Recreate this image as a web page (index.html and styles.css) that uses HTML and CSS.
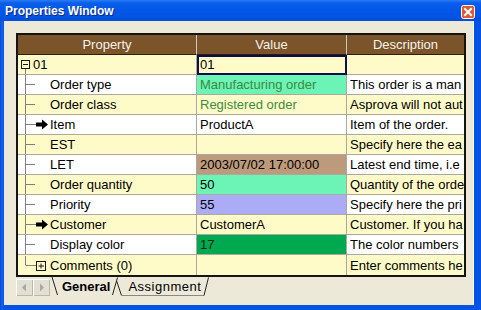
FILE: index.html
```html
<!DOCTYPE html>
<html>
<head>
<meta charset="utf-8">
<link rel="stylesheet" href="styles.css">
</head>
<body>
<div class="window">
  <div class="titlebar">
    <span class="title">Properties Window</span>
    <span class="close">
      <svg width="14" height="14" viewBox="0 0 14 14">
        <rect x="0.5" y="0.5" width="13" height="13" rx="2" fill="#E2582F" stroke="#FFFFFF"/>
        <path d="M4 4 L10 10 M10 4 L4 10" stroke="#FFFFFF" stroke-width="2" stroke-linecap="square"/>
      </svg>
    </span>
  </div>
  <div class="frame">
    <div class="client">
      <div class="grid">
        <div class="cell head c1">Property</div>
        <div class="cell head c2">Value</div>
        <div class="cell head c3">Description</div>

        <div class="cell c1 y prop root">
          <svg class="gut-root" width="15" height="19" viewBox="0 0 15 19">
            <rect x="3.5" y="5.5" width="8" height="8" fill="none" stroke="#1a1a1a"/>
            <path d="M5 9.5 H10" stroke="#1a1a1a"/>
            <path d="M7.5 14 V19" stroke="#808080"/>
          </svg>01</div>
        <div class="cell c2 y sel">01</div>
        <div class="cell c3 y"></div>

        <div class="cell c1 w prop">
          <svg class="gut" width="32" height="19" viewBox="0 0 32 19"><path d="M7.5 0 V19 M8 9.5 H17" stroke="#808080"/></svg>Order type</div>
        <div class="cell c2 mint gtext">Manufacturing order</div>
        <div class="cell c3 w">This order is a man</div>

        <div class="cell c1 y prop">
          <svg class="gut" width="32" height="19" viewBox="0 0 32 19"><path d="M7.5 0 V19 M8 9.5 H17" stroke="#808080"/></svg>Order class</div>
        <div class="cell c2 y gtext">Registered order</div>
        <div class="cell c3 y">Asprova will not aut</div>

        <div class="cell c1 w prop">
          <svg class="gut" width="32" height="19" viewBox="0 0 32 19"><path d="M7.5 0 V19 M8 9.5 H18" stroke="#808080"/><path d="M18 7.5 H24 V4.5 L30 9.5 L24 14.5 V11.5 H18 Z" fill="#000"/></svg>Item</div>
        <div class="cell c2 w">ProductA</div>
        <div class="cell c3 w">Item of the order.</div>

        <div class="cell c1 y prop">
          <svg class="gut" width="32" height="19" viewBox="0 0 32 19"><path d="M7.5 0 V19 M8 9.5 H17" stroke="#808080"/></svg>EST</div>
        <div class="cell c2 y"></div>
        <div class="cell c3 y">Specify here the ea</div>

        <div class="cell c1 w prop">
          <svg class="gut" width="32" height="19" viewBox="0 0 32 19"><path d="M7.5 0 V19 M8 9.5 H17" stroke="#808080"/></svg>LET</div>
        <div class="cell c2 tan">2003/07/02 17:00:00</div>
        <div class="cell c3 w">Latest end time, i.e</div>

        <div class="cell c1 y prop">
          <svg class="gut" width="32" height="19" viewBox="0 0 32 19"><path d="M7.5 0 V19 M8 9.5 H17" stroke="#808080"/></svg>Order quantity</div>
        <div class="cell c2 mint">50</div>
        <div class="cell c3 y">Quantity of the orde</div>

        <div class="cell c1 w prop">
          <svg class="gut" width="32" height="19" viewBox="0 0 32 19"><path d="M7.5 0 V19 M8 9.5 H17" stroke="#808080"/></svg>Priority</div>
        <div class="cell c2 lav">55</div>
        <div class="cell c3 w">Specify here the pri</div>

        <div class="cell c1 y prop">
          <svg class="gut" width="32" height="19" viewBox="0 0 32 19"><path d="M7.5 0 V19 M8 9.5 H18" stroke="#808080"/><path d="M18 7.5 H24 V4.5 L30 9.5 L24 14.5 V11.5 H18 Z" fill="#000"/></svg>Customer</div>
        <div class="cell c2 y">CustomerA</div>
        <div class="cell c3 y">Customer. If you ha</div>

        <div class="cell c1 w prop">
          <svg class="gut" width="32" height="19" viewBox="0 0 32 19"><path d="M7.5 0 V19 M8 9.5 H17" stroke="#808080"/></svg>Display color</div>
        <div class="cell c2 green">17</div>
        <div class="cell c3 w">The color numbers</div>

        <div class="cell c1 y prop last">
          <svg class="gut" width="32" height="19" viewBox="0 0 32 19"><path d="M7.5 0 V9.5 M8 9.5 H18" stroke="#808080"/><rect x="18.5" y="5.5" width="9" height="9" fill="none" stroke="#1a1a1a"/><path d="M20.5 10 H26 M23 7.5 V12.5" stroke="#1a1a1a"/></svg>Comments (0)</div>
        <div class="cell c2 y last"></div>
        <div class="cell c3 y last">Enter comments he</div>
      </div>

      <div class="tabbar">
        <span class="sbtn">
          <svg width="17" height="17" viewBox="0 0 17 17"><path d="M6 8.5 L10 4.5 V12.5 Z" fill="#A9A9A2"/></svg>
        </span>
        <span class="sbtn">
          <svg width="17" height="17" viewBox="0 0 17 17"><path d="M11 8.5 L7 4.5 V12.5 Z" fill="#A9A9A2"/></svg>
        </span>
        <svg class="edge" width="11" height="20" viewBox="0 0 11 20"><path d="M2 0 L7.5 18" stroke="#222" fill="none"/></svg>
        <span class="tab active">General</span>
        <svg class="edge" width="16" height="20" viewBox="0 0 16 20"><path d="M1.5 18 L6.5 0.5" stroke="#222" fill="none"/><path d="M5.6 4 L10.5 18.5" stroke="#222" fill="none"/><path d="M10 18.5 H16" stroke="#888" fill="none"/></svg>
        <span class="tab">Assignment</span>
        <svg class="edge" width="10" height="20" viewBox="0 0 10 20"><path d="M0 18.5 H3" stroke="#888" fill="none"/><path d="M3 18.5 L7.5 0.5" stroke="#222" fill="none"/></svg>
      </div>
    </div>
  </div>
</div>
</body>
</html>
```

FILE: styles.css
```css
html, body {
  margin: 0;
  padding: 0;
}

body {
  width: 481px;
  height: 310px;
  overflow: hidden;
  font-family: "Liberation Sans", Arial, sans-serif;
}

.window {
  width: 481px;
  height: 310px;
  display: flex;
  flex-direction: column;
  background: #0553E2;
}

.titlebar {
  height: 21px;
  flex: none;
  display: flex;
  align-items: center;
  padding: 0 6px 0 5px;
  background: linear-gradient(to bottom, #2B7DF6 0px, #0A5EEA 3px, #0458E8 10px, #0254E2 17px, #004ED8 21px);
}

.title {
  color: #FFFFFF;
  font-weight: bold;
  font-size: 12px;
  text-shadow: 1px 1px 0 #0A2A8C;
}

.close {
  margin-left: auto;
  display: flex;
  margin-top: 2px;
}

.frame {
  flex: 1;
  display: flex;
  padding: 0 7px 5px 4px;
  background: linear-gradient(to right, #0847D0 0px, #1462EE 2px, #0553E2 4px);
}

.client {
  flex: 1;
  background: #ECE9D8;
  padding: 12px 8px 0 12px;
  display: flex;
  flex-direction: column;
  box-shadow: inset -1px 0 0 #FAF9F4;
}

.grid {
  width: 450px;
  box-sizing: border-box;
  border: 2px solid #141414;
  display: grid;
  grid-template-columns: 179px 150px 117px;
  grid-auto-rows: 20px;
  font-size: 13px;
  color: #000;
}

.cell {
  box-sizing: border-box;
  border-right: 1px solid #ABA89C;
  border-bottom: 1px solid #ABA89C;
  display: flex;
  align-items: center;
  padding-left: 3px;
  white-space: nowrap;
  overflow: hidden;
}

.cell.c3 {
  border-right: none;
}

.cell.last {
  border-bottom: none;
}

.head {
  background: #7B5429;
  color: #F4F2EE;
  justify-content: center;
  padding-left: 0;
  border-right: 1px solid #CFC7B8;
  border-bottom: 1px solid #2E1E0C;
}

.head.c3 {
  border-right: none;
}

.prop {
  padding-left: 0;
}

.gut, .gut-root {
  flex: none;
  display: block;
}

.y { background: #FFFBC8; }
.w { background: #FFFFFF; }
.mint { background: #6CF4B6; }
.tan { background: #BE9A7C; }
.lav { background: #ABABF6; }
.green { background: #00A84F; color: #0E2A14; }
.gtext { color: #3D8A3D; }

.sel {
  outline: 2px solid #0C0C4E;
  outline-offset: -2px;
}

.tabbar {
  height: 21px;
  display: flex;
  align-items: flex-start;
  font-size: 13px;
}

.sbtn {
  width: 17px;
  height: 17px;
  margin-top: 2px;
  background: #E2DFD3;
  box-shadow: inset 1px 1px 0 #FFFFFF, inset -1px -1px 0 #B9B6AA;
  display: flex;
}

.edge {
  display: block;
  flex: none;
}

.tab {
  height: 19px;
  display: flex;
  align-items: flex-end;
  padding-bottom: 2px;
  box-sizing: border-box;
  color: #000;
}

.tab.active {
  font-weight: bold;
  padding-left: 1px;
  padding-right: 1px;
}

.tab:not(.active) {
  border-bottom: 1px solid #888;
  padding-bottom: 1px;
  letter-spacing: 0.5px;
  padding-left: 1px;
}
```
